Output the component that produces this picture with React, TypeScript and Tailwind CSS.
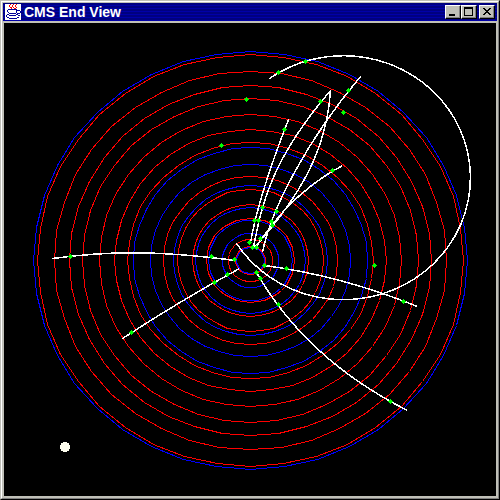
import React from 'react';

type Point = [number, number];

const CENTER: Point = [250, 260];

const SHELLS: { rx: number; ry: number; color: string }[] = [
  { rx: 217, ry: 209, color: '#0000ff' },
  { rx: 117, ry: 113, color: '#0000ff' },
  { rx: 100, ry: 96, color: '#0000ff' },
  { rx: 77, ry: 75, color: '#0000ff' },
  { rx: 55, ry: 53, color: '#0000ff' },
  { rx: 42, ry: 40, color: '#0000ff' },
  { rx: 28, ry: 27, color: '#0000ff' },
  { rx: 213, ry: 206, color: '#ff0000' },
  { rx: 196, ry: 189, color: '#ff0000' },
  { rx: 181, ry: 175, color: '#ff0000' },
  { rx: 168, ry: 162, color: '#ff0000' },
  { rx: 151, ry: 146, color: '#ff0000' },
  { rx: 136, ry: 131, color: '#ff0000' },
  { rx: 123, ry: 118, color: '#ff0000' },
  { rx: 87, ry: 84, color: '#ff0000' },
  { rx: 73, ry: 71, color: '#ff0000' },
  { rx: 58, ry: 56, color: '#ff0000' },
  { rx: 44, ry: 42, color: '#ff0000' },
  { rx: 22, ry: 21, color: '#ff0000' },
  { rx: 14, ry: 14, color: '#0000ff' },
  { rx: 15, ry: 14, color: '#ff0000' },
  { rx: 14, ry: 13, color: '#0000ff' },
];

const TRACKS = [
  'M52 258 C105 251 150 249 235 260',
  'M122 338 Q180 300 239 268',
  'M264 265 Q340 275 417 306',
  'M256 272 Q306 359 407 410',
  'M236 243 A127 122 0 1 0 269 78',
  'M250 242 Q258 196 288 119',
  'M253 247 C261 205 270 160 330 90',
  'M262 252 C270 210 306 140 360 76',
  'M330 90 C326 150 300 195 254 247',
  'M255 247 C270 225 295 190 342 165',
];

const HITS: Point[] = [
  [278, 72], [305, 61], [246, 99], [320, 101], [348, 90], [343, 112], [284, 129], [221, 145],
  [332, 170], [262, 207], [254, 220], [258, 220], [276, 211], [271, 221], [272, 225], [260, 238],
  [249, 242], [252, 247], [256, 247], [211, 256], [234, 259], [264, 265], [286, 268], [256, 272],
  [260, 278], [227, 274], [214, 282], [374, 265], [403, 301], [278, 304], [390, 401], [131, 332],
  [70, 256],
];

// each shell is drawn as a 40 sided polygon
function shellPoints(rx: number, ry: number) {
  return Array.from({ length: 40 }, (_, i) => {
    const a = (i * Math.PI) / 20;
    return `${Math.round(CENTER[0] + rx * Math.cos(a))},${Math.round(CENTER[1] + ry * Math.sin(a))}`;
  }).join(' ');
}

function JavaIcon() {
  return (
    <svg viewBox="0 0 16 16" className="h-4 w-4 shrink-0 bg-white" fill="none" shapeRendering="crispEdges">
      <path
        d="M5 0h1v1h-1zM8 0h1v1h-1zM11 0h1v1h-1zM4 1h1v2h-1zM7 1h1v2h-1zM10 1h1v2h-1zM5 3h2v1h-2zM8 3h1v1h-1zM11 3h1v1h-1zM6 4h1v1h-1zM9 4h2v1h-2z"
        fill="#ff0000"
      />
      <path
        d="M3 5h9v1h-9zM2 6h1v2h-1zM12 6h3v1h-3zM11 6h1v2h-1zM15 7h1v2h-1zM3 8h1v1h-1zM11 8h1v1h-1zM12 9h3v1h-3zM4 9h7v1h-7zM2 10h2v1h-2zM11 10h2v1h-2zM1 11h1v2h-1zM4 11h7v1h-7zM13 11h2v1h-2zM2 13h2v1h-2zM12 13h2v1h-2zM4 14h8v1h-8z"
        fill="#000098"
      />
    </svg>
  );
}

interface TitleButtonProps {
  label: string;
  children: React.ReactNode;
  className?: string;
}

function TitleButton({ label, children, className = '' }: TitleButtonProps) {
  return (
    <button
      type="button"
      aria-label={label}
      className={`h-[14px] w-4 border border-t-white border-l-white border-r-black border-b-black bg-[#c0c0b8] shadow-[inset_-1px_-1px_0_#808080] ${className}`}
    >
      <svg viewBox="0 0 14 12" className="block h-3 w-[14px]" fill="none" stroke="#000" shapeRendering="crispEdges">
        {children}
      </svg>
    </button>
  );
}

function EventDisplay() {
  return (
    <svg viewBox="4 23 492 473" className="block w-full bg-black" fill="none" shapeRendering="crispEdges" role="img" aria-label="CMS end view">
      <g transform="translate(0.5 0.5)">
        {SHELLS.map((s, i) => (
          <polygon key={i} points={shellPoints(s.rx, s.ry)} stroke={s.color} />
        ))}
        {TRACKS.map((d) => (
          <path key={d} d={d} stroke="#fff" strokeWidth="1.5" />
        ))}
      </g>
      {HITS.map(([x, y]) => (
        <path key={`${x}-${y}`} d={`M${x} ${y - 2}h1v1h1v1h1v1h-1v1h-1v1h-1v-1h-1v-1h-1v-1h1v-1h1z`} fill="#00ff00" />
      ))}
      <circle cx="65" cy="447" r="5" fill="#fffff0" />
    </svg>
  );
}

export default function App() {
  return (
    <div className="border border-t-[#c0c0b8] border-l-[#c0c0b8] border-r-black border-b-black bg-[#c0c0b8]">
      <div className="border border-t-white border-l-white border-r-[#808080] border-b-[#808080] pt-px pb-[2px]">
        <header className="mr-px ml-px flex h-[18px] items-center bg-[#000090] bg-[repeating-linear-gradient(0deg,#0000a8_0_1px,#000080_1px_3px)] pr-[2px] pl-[2px]">
          <JavaIcon />
          <h1 className="ml-[3px] flex-1 font-['Liberation_Sans',sans-serif] text-[14px] leading-[18px] font-bold whitespace-nowrap text-white">
            CMS End View
          </h1>
          <TitleButton label="Minimize">
            <path d="M3 9h6" strokeWidth="2" />
          </TitleButton>
          <TitleButton label="Maximize">
            <path d="M2 1h9v2h-9zM2 3h1v6h-1zM10 3h1v6h-1zM2 9h9v1h-9z" fill="#000" stroke="none" />
          </TitleButton>
          <TitleButton label="Close" className="ml-[2px]">
            <path d="M3 2h2v1h1v1h2v-1h1v-1h2v1h-1v1h-1v1h-1v1h1v1h1v1h1v1h-2v-1h-1v-1h-2v1h-1v1h-2v-1h1v-1h1v-1h1v-1h-1v-1h-1v-1h-1z" fill="#000" stroke="none" />
          </TitleButton>
        </header>
        <main className="mx-[2px] mt-[2px]">
          <EventDisplay />
        </main>
      </div>
    </div>
  );
}
